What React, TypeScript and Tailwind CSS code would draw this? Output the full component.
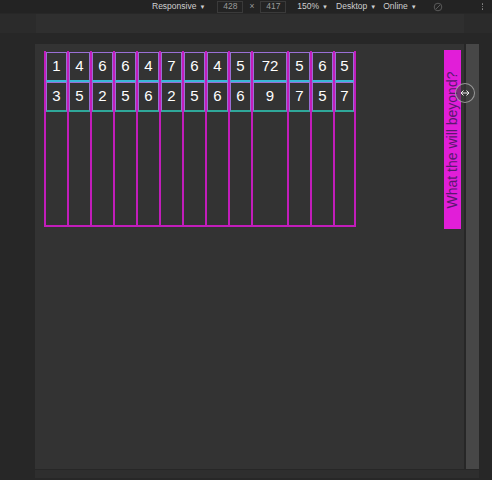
const TOP = ["1", "4", "6", "6", "4", "7", "6", "4", "5", "72", "5", "6", "5"];
const BOTTOM = ["3", "5", "2", "5", "6", "2", "5", "6", "6", "9", "7", "5", "7"];

function Caret() {
  return <span className="ml-[3px] text-[6px] leading-none text-[#d0d0d0]">▼</span>;
}

function Toolbar() {
  return (
    <div className="flex h-[13px] items-center bg-[#232323] text-[8.5px] leading-none text-[#cfcfcf]">
      <div className="ml-[152px] flex items-center">
        Responsive
        <Caret />
      </div>
      <div className="ml-[12px] flex h-[12px] w-[26px] items-center justify-center border border-[#3a3a3a] text-[#9a9a9a]">
        428
      </div>
      <span className="mx-[6px] text-[#9a9a9a]">×</span>
      <div className="flex h-[12px] w-[26px] items-center justify-center border border-[#3a3a3a] text-[#9a9a9a]">
        417
      </div>
      <div className="ml-[11px] flex items-center">
        150%
        <Caret />
      </div>
      <div className="ml-[8px] flex items-center">
        Desktop
        <Caret />
      </div>
      <div className="ml-[7px] flex items-center">
        Online
        <Caret />
      </div>
      <svg className="ml-[16px]" width="10" height="10" viewBox="0 0 10 10">
        <circle cx="5" cy="5" r="3.8" fill="none" stroke="#5a5a5a" strokeWidth="1" />
        <path d="M3 7 L7 3" stroke="#5a5a5a" strokeWidth="1" />
      </svg>
      <div className="ml-auto mr-[9px] flex flex-col gap-[1px]">
        <span className="h-[1.5px] w-[1.5px] rounded-full bg-[#8a8a8a]" />
        <span className="h-[1.5px] w-[1.5px] rounded-full bg-[#8a8a8a]" />
        <span className="h-[1.5px] w-[1.5px] rounded-full bg-[#8a8a8a]" />
      </div>
    </div>
  );
}

function Column({ top, bottom, wide, last }: { top: string; bottom: string; wide?: boolean; last?: boolean }) {
  return (
    <div
      className={`flex h-full flex-col border-l-2 border-[#c21dbb] pt-[1px] ${wide ? "w-[36px]" : "w-[23px]"} ${last ? "border-r-2" : ""}`}
    >
      {[top, bottom].map((v, i) => (
        <div
          key={i}
          className={`flex h-[30px] items-center justify-center border-x border-t border-[#9a6fd6] border-b-2 text-[15px] text-white ${i === 0 ? "border-b-[#3ab8d8]" : "border-b-[#2fa89a]"}`}
        >
          {v}
        </div>
      ))}
    </div>
  );
}

export default function App() {
  return (
    <div className="relative flex h-[480px] w-[492px] flex-col overflow-hidden bg-[#272727] [font-family:'Liberation_Sans',Arial,sans-serif]">
      <Toolbar />
      <div className="mt-[1px] flex h-[19px] bg-[#2b2b2b]">
        <div className="ml-[36px] h-full w-[428px] bg-[#2f2f2f]" />
      </div>
      <div className="mt-[11px] flex gap-[2px] pl-[35px]">
        <div className="relative h-[425px] w-[429px] bg-[#333333]">
          <div className="ml-[9px] mt-[7px] flex h-[176px] w-fit border-b-2 border-[#c21dbb]">
            {TOP.map((t, i) => (
              <Column key={i} top={t} bottom={BOTTOM[i]} wide={t === "72"} last={i === TOP.length - 1} />
            ))}
          </div>
          <div className="absolute left-[409px] top-[6px] flex h-[179px] w-[17px] items-center justify-center bg-[#e11ed8]">
            <span className="-rotate-90 whitespace-nowrap text-[14px] leading-none text-[#5a1870]">
              What the will beyond?
            </span>
          </div>
        </div>
        <div className="h-[425px] w-[13px] bg-[#474747]" />
      </div>
      <div className="ml-[35px] mt-[1px] h-[8px] w-[444px] bg-[#2e2e2e]" />
      <div className="absolute left-[455px] top-[83px] flex h-[20px] w-[20px] items-center justify-center rounded-full border border-[#bdbdbd]/70 bg-[#3a3a3a]/60">
        <svg width="10" height="8" viewBox="0 0 10 8">
          <path d="M1 4 L3.5 1.5 M1 4 L3.5 6.5 M1 4 L9 4 M9 4 L6.5 1.5 M9 4 L6.5 6.5" stroke="#eaeaea" strokeWidth="1" fill="none" />
        </svg>
      </div>
    </div>
  );
}
